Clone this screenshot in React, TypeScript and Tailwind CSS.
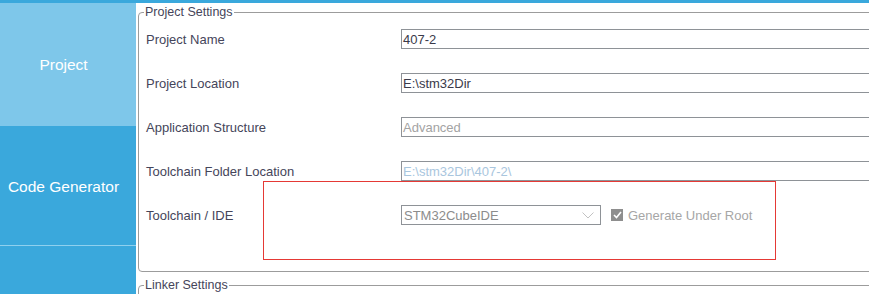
import React from "react";

const font = { fontFamily: '"Liberation Sans", Arial, sans-serif' };

function Row({ label, children }: { label: string; children: React.ReactNode }) {
  return (
    <div className="flex h-[20px] items-center">
      <div className="w-[255px] shrink-0 text-[13px] leading-none text-[#45455a]">{label}</div>
      {children}
    </div>
  );
}

function TextBox({ value, color }: { value: string; color: string }) {
  return (
    <div className={`flex h-[20px] w-[520px] shrink-0 items-center border border-[#8e9297] bg-white pl-[1px] text-[13px] leading-none ${color}`}>
      {value}
    </div>
  );
}

export default function App() {
  return (
    <div className="relative h-[294px] w-[869px] overflow-hidden bg-white" style={font}>
      <div className="h-[3px] w-full bg-[#3aa8dc]" />
      <div className="flex h-[291px]">
        <div className="flex w-[136px] shrink-0 flex-col bg-[#3aa8dc] text-[15.5px] text-white">
          <div className="flex h-[123px] items-center justify-center bg-[#7ec7ea] pr-[9px]">Project</div>
          <div className="flex h-[120px] items-center justify-center border-b border-[#8fd0ee] pr-[9px] pt-[2px]">Code Generator</div>
        </div>
        <div className="ml-[2px] flex-1 overflow-hidden">
          <fieldset className="mt-[2px] w-[800px] rounded-[4px] border border-[#9c9c9c] pb-[46px] pl-[7px] pt-[10px]">
            <legend className="-ml-[2px] px-[1px] text-[12.5px] leading-[14px] text-[#45455a]">Project Settings</legend>
            <div className="flex flex-col gap-[24px]">
              <Row label="Project Name">
                <TextBox value="407-2" color="text-[#3a3a4a]" />
              </Row>
              <Row label="Project Location">
                <TextBox value="E:\stm32Dir" color="text-[#3a3a4a]" />
              </Row>
              <Row label="Application Structure">
                <TextBox value="Advanced" color="text-[#a3a3a3]" />
              </Row>
              <Row label="Toolchain Folder Location">
                <TextBox value="E:\stm32Dir\407-2\" color="text-[#a9c6de]" />
              </Row>
              <Row label="Toolchain / IDE">
                <div className="flex h-[20px] w-[200px] shrink-0 items-center justify-between border border-[#8e9297] bg-white pl-[2px] pr-[6px] text-[13px] leading-none text-[#8c8c8c]">
                  <span>STM32CubeIDE</span>
                  <svg width="12" height="7" viewBox="0 0 12 7" fill="none">
                    <path d="M0.5 0.5 L6 6 L11.5 0.5" stroke="#c2c2c2" strokeWidth="1" />
                  </svg>
                </div>
                <div className="ml-[10px] flex items-center gap-[5px] text-[13px] leading-none text-[#a6a6a6]">
                  <div className="flex h-[12px] w-[12px] items-center justify-center bg-[#8e8e8e]">
                    <svg width="9" height="8" viewBox="0 0 9 8" fill="none">
                      <path d="M1 4 L3.5 6.5 L8 1" stroke="white" strokeWidth="1.6" />
                    </svg>
                  </div>
                  <span>Generate Under Root</span>
                </div>
              </Row>
            </div>
          </fieldset>
          <fieldset className="mt-[6px] h-[40px] w-[800px] rounded-[4px] border border-[#9c9c9c]">
            <legend className="ml-[5px] px-[1px] text-[12.5px] leading-[14px] text-[#45455a]">Linker Settings</legend>
          </fieldset>
        </div>
      </div>
      <div className="absolute left-[263px] top-[181px] h-[79px] w-[513px] border border-[#e53935]" />
    </div>
  );
}
